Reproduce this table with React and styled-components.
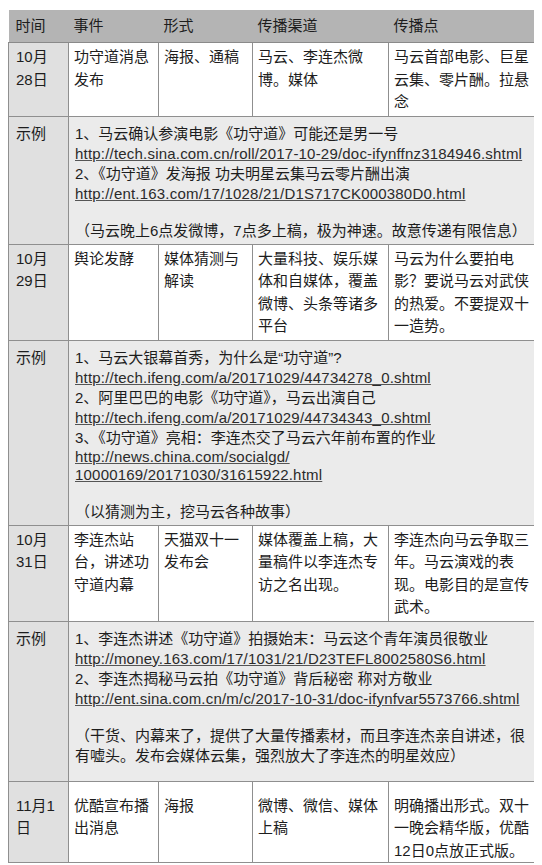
import styled, { createGlobalStyle } from "styled-components";

const GlobalStyle = createGlobalStyle`
  body {
    margin: 10px 8px;
    background: #ffffff;
    font-family: "Liberation Sans", "Noto Sans CJK SC", sans-serif;
  }
`;

const Table = styled.table`
  width: 526px;
  border-collapse: collapse;
  table-layout: fixed;
  font-size: 15px;
  line-height: 22.5px;
  color: #1d1d1d;
`;

const HeadCell = styled.th`
  height: 32px;
  padding: 0 5px;
  background: #b4b4b4;
  border-bottom: 1px solid #8a8a8a;
  font-weight: normal;
  text-align: left;
  vertical-align: middle;
`;

const FirstHeadCell = styled(HeadCell)`
  padding-left: 7px;
`;

const Cell = styled.td`
  padding: ${(p) => (p.$last ? "13px 5px 0" : "3px 5px 2px")};
  border: 1px solid #8f8f8f;
  vertical-align: top;
`;

const DateCell = styled(Cell)`
  padding-left: 7px;
  background: #e0e0e0;
`;

const ExampleLabel = styled(DateCell)`
  padding-top: 7px;
  line-height: 20px;
`;

const ExampleBody = styled(Cell)`
  padding: 7px 5px ${(p) => p.$after + 3}px 6px;
  background: #ebebeb;
  line-height: 20px;
`;

const Line = styled.div``;

const UrlLine = styled.div`
  line-height: ${(p) => (p.$wrapped ? "18.5px" : "20px")};
`;

const Link = styled.a`
  color: #2a2a2a;
  text-decoration: underline;
  text-decoration-color: #555;
  letter-spacing: 0.2px;
`;

const Note = styled.div`
  margin-top: 17px;
`;

const rows = [
  {
    date: "10月28日",
    cells: ["功守道消息发布", "海报、通稿", "马云、李连杰微博。媒体", "马云首部电影、巨星云集、零片酬。拉悬念"],
    items: [
      ["1、马云确认参演电影《功守道》可能还是男一号", "http://tech.sina.com.cn/roll/2017-10-29/doc-ifynffnz3184946.shtml"],
      ["2、《功守道》发海报 功夫明星云集马云零片酬出演", "http://ent.163.com/17/1028/21/D1S717CK000380D0.html"],
    ],
    note: "（马云晚上6点发微博，7点多上稿，极为神速。故意传递有限信息）",
    after: 0,
  },
  {
    date: "10月29日",
    cells: ["舆论发酵", "媒体猜测与解读", "大量科技、娱乐媒体和自媒体，覆盖微博、头条等诸多平台", "马云为什么要拍电影？要说马云对武侠的热爱。不要提双十一造势。"],
    items: [
      ["1、马云大银幕首秀，为什么是“功守道”?", "http://tech.ifeng.com/a/20171029/44734278_0.shtml"],
      ["2、阿里巴巴的电影《功守道》，马云出演自己", "http://tech.ifeng.com/a/20171029/44734343_0.shtml"],
      ["3、《功守道》亮相：李连杰交了马云六年前布置的作业", "http://news.china.com/socialgd/ 10000169/20171030/31615922.html", true],
    ],
    note: "（以猜测为主，挖马云各种故事）",
    after: 0,
  },
  {
    date: "10月31日",
    cells: ["李连杰站台，讲述功守道内幕", "天猫双十一发布会", "媒体覆盖上稿，大量稿件以李连杰专访之名出现。", "李连杰向马云争取三年。马云演戏的表现。电影目的是宣传武术。"],
    items: [
      ["1、李连杰讲述《功守道》拍摄始末：马云这个青年演员很敬业", "http://money.163.com/17/1031/21/D23TEFL8002580S6.html"],
      ["2、李连杰揭秘马云拍《功守道》背后秘密 称对方敬业", "http://ent.sina.com.cn/m/c/2017-10-31/doc-ifynfvar5573766.shtml"],
    ],
    note: "（干货、内幕来了，提供了大量传播素材，而且李连杰亲自讲述，很有嘘头。发布会媒体云集，强烈放大了李连杰的明星效应）",
    after: 12,
  },
];

export default function App() {
  return (
    <>
      <GlobalStyle />
      <Table>
        <colgroup>
          <col style={{ width: 60 }} />
          <col style={{ width: 90 }} />
          <col style={{ width: 94 }} />
          <col style={{ width: 136 }} />
          <col style={{ width: 146 }} />
        </colgroup>
        <thead>
          <tr>
            <FirstHeadCell>时间</FirstHeadCell>
            <HeadCell>事件</HeadCell>
            <HeadCell>形式</HeadCell>
            <HeadCell>传播渠道</HeadCell>
            <HeadCell>传播点</HeadCell>
          </tr>
        </thead>
        <tbody>
          {rows.map((row) => [
            <tr key={row.date}>
              <DateCell>{row.date}</DateCell>
              {row.cells.map((c, i) => (
                <Cell key={i}>{c}</Cell>
              ))}
            </tr>,
            <tr key={row.date + "-ex"}>
              <ExampleLabel>示例</ExampleLabel>
              <ExampleBody colSpan={4} $after={row.after}>
                {row.items.map(([title, url, wrapped], i) => (
                  <div key={i}>
                    <Line>{title}</Line>
                    <UrlLine $wrapped={wrapped}>
                      <Link href="#">{url}</Link>
                    </UrlLine>
                  </div>
                ))}
                <Note>{row.note}</Note>
              </ExampleBody>
            </tr>,
          ])}
          <tr>
            <DateCell $last>11月1日</DateCell>
            <Cell $last>优酷宣布播出消息</Cell>
            <Cell $last>海报</Cell>
            <Cell $last>微博、微信、媒体上稿</Cell>
            <Cell $last>明确播出形式。双十一晚会精华版，优酷12日0点放正式版。</Cell>
          </tr>
        </tbody>
      </Table>
    </>
  );
}
